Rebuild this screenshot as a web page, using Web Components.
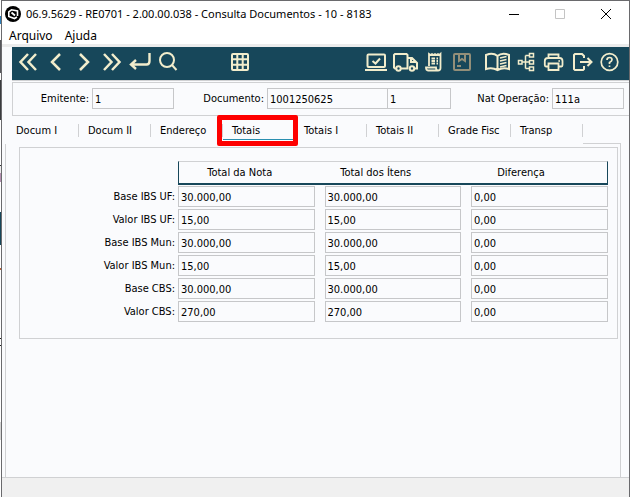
<!DOCTYPE html>
<html lang="pt-BR">
<head>
<meta charset="utf-8">
<meta name="viewport" content="width=device-width, initial-scale=1">
<title>Consulta Documentos</title>
<style>
  body {
    margin: 0;
    color: #000;
    font-family: "DejaVu Sans Condensed", "DejaVu Sans", sans-serif;
    font-size: 11px;
    --ui-font: "Noto Sans", "Open Sans", sans-serif;
    --line: #d0d1d3;
    --field-line: #c6c7c9;
    --face: #fafbfd;
    --bar: #17475a;
    --icon: #f2edcc;
  }
</style>
</head>
<body>
<app-window>
  <title-bar slot="top">06.9.5629 - RE0701 - 2.00.00.038 - Consulta Documentos - 10 - 8183</title-bar>
  <menu-bar slot="top" items="Arquivo,Ajuda"></menu-bar>
  <tool-bar></tool-bar>
  <document-header>
    <text-field label="Emitente:" values="1" widths="82"></text-field>
    <text-field label="Documento:" values="1001250625,1" widths="121,64"></text-field>
    <text-field label="Nat Operação:" values="111a" widths="72"></text-field>
  </document-header>
  <tab-strip items="Docum I,Docum II,Endereço,Totais,Totais I,Totais II,Grade Fisc,Transp" active="3">
    <totals-table></totals-table>
  </tab-strip>
  <status-bar slot="bottom"></status-bar>
</app-window>

<script>
class BaseElement extends HTMLElement {
  connectedCallback() {
    if (!this.shadowRoot) this.attachShadow({ mode: 'open' });
    this.shadowRoot.innerHTML = this.getStyle() + this.getTemplate();
  }

  list(name) {
    return (this.getAttribute(name) || '').split(',');
  }
}

class AppWindow extends BaseElement {
  getTemplate() {
    return `
      <div class="frame">
        <slot name="top"></slot>
        <main><slot></slot></main>
        <slot name="bottom"></slot>
      </div>
    `;
  }

  getStyle() {
    return `
      <style>
        :host {
          display: flex;
          min-height: 100vh;
          box-sizing: border-box;
          padding-left: 1px;
          background: linear-gradient(#fff 0 16px, #2f7fb8 16px 24px, #fff 24px 40px, #55565a 40px 73px,
            #fff 73px 80px, #3a3b3e 80px 120px, #fff 120px 165px, #333 165px 166px, #eee 166px 173px,
            #b48fb0 173px 182px, #fff 182px 212px, #17475a 212px 245px, #fff 245px 268px, #b8623a 268px 270px,
            #fff 270px 338px, #222 338px 339px, #fff 339px 345px, #222 345px 346px, #fff 346px 422px,
            #d5d5d5 422px 440px, #fff 440px);
        }
        .frame {
          flex: 1;
          min-width: 0;
          display: flex;
          flex-direction: column;
          border: solid #6a6a6d;
          border-width: 1px 1px 0;
          background: #fff;
        }
        main {
          flex: 1;
          display: flex;
          flex-direction: column;
          border-top: 3px solid #ececec;
          background: var(--face);
        }
      </style>
    `;
  }
}

class TitleBar extends BaseElement {
  getTemplate() {
    return `
      <svg class="logo" viewBox="0 0 18 18" width="18" height="18" aria-hidden="true">
        <circle cx="9" cy="9" r="8" fill="#000"/>
        <path d="M13.5 11V6L7.5 4.8L4.800 6.800V11.500L10.500 13.500L13 12" fill="none" stroke="#fff" stroke-width="1.600"/>
        <path d="M7.500 7.500L11 10.500" stroke="#fff" stroke-width="1.800"/>
      </svg>
      <h1><slot></slot></h1>
      <button aria-label="Minimizar"><svg viewBox="0 0 10 10"><path d="M0 5.5H10"/></svg></button>
      <button aria-label="Maximizar" disabled><svg viewBox="0 0 10 10"><path d="M.5 .5H9.5V9.5H.5Z"/></svg></button>
      <button aria-label="Fechar"><svg viewBox="0 0 10 10"><path d="M0 0L10 10M10 0L0 10"/></svg></button>
    `;
  }

  getStyle() {
    return `
      <style>
        :host {
          display: flex;
          align-items: center;
          height: 26px;
          padding-left: 2px;
          font-family: var(--ui-font);
        }
        .logo { flex: none; }
        h1 {
          flex: 1;
          margin: 0 0 0 4px;
          font-size: 11px;
          line-height: 16px;
          font-weight: normal;
          white-space: nowrap;
        }
        button {
          width: 46px;
          height: 24px;
          padding: 0;
          border: 0;
          background: none;
          color: #000;
        }
        button:disabled { color: #c4c4c4; }
        button svg {
          display: block;
          width: 10px;
          height: 10px;
          margin: 0 auto;
          fill: none;
          stroke: currentColor;
        }
      </style>
    `;
  }
}

class MenuBar extends BaseElement {
  getTemplate() {
    return this.list('items').map((item) => `<button>${item}</button>`).join('');
  }

  getStyle() {
    return `
      <style>
        :host {
          display: flex;
          gap: 12px;
          height: 17px;
          padding-left: 7px;
        }
        button {
          padding: 0;
          border: 0;
          background: none;
          color: inherit;
          font: 12px/17px var(--ui-font);
        }
      </style>
    `;
  }
}

const ICONS = {
  first: '<path d="M14 4L6.500 12L14 20M22 4L14.500 12L22 20" stroke-width="2.500"/>',
  previous: '<path d="M18 4L10 12L18 20" stroke-width="2.500"/>',
  next: '<path d="M10 4L18 12L10 20" stroke-width="2.500"/>',
  last: '<path d="M6 4L13.500 12L6 20M14 4L21.500 12L14 20" stroke-width="2.500"/>',
  enter: '<path d="M23.500 3V11Q23.500 14.500 20.500 14.500H5M10 10L5 14.500L10 19" stroke-width="2.400"/>',
  search: '<circle cx="13" cy="10" r="7"/><path d="M18 15L22.500 20"/>',
  grid: '<rect x="6" y="4" width="16" height="16" rx="1"/><path d="M11.300 4V20M16.700 4V20M6 9.300H22M6 14.700H22"/>',
  laptop: '<rect x="3.500" y="4.500" width="17.500" height="12.500" rx="1"/><path d="M1 20H23M8.500 11L11.500 13.500L16 8.500"/>',
  truck: '<path d="M4.500 18.500H3L2 17.500V5L3 4H14.500L15.500 5V18.500H9M15.500 8H20L25 13V18.500H22.500M19 8V12H24"/><circle cx="6.500" cy="18.500" r="2.200"/><circle cx="20" cy="18.500" r="2.200"/>',
  receipt: '<path d="M9 16V4L10.500 5L12 4L13.500 5L15 4L16.500 5L18 4L19.500 5L20.500 4V18Q20.500 20.500 18 20.500H8Q6 20.500 6 17.500H16Q16 20.500 18 20.500M11.500 8.500H15M16.500 8.500H18M11.500 11H15M16.500 11H18M11.500 13.500H15M16.500 13.500H18" stroke-width="1.800"/>',
  save: '<rect x="6" y="4" width="16" height="16" rx="1"/><path d="M11 4V11L14 9L17 11V4M9 16H13"/>',
  book: '<path d="M13.500 6Q10 3 5 4L2 5V19Q8 17 13.500 20Q19 17 25 19V5Q18 2 13.500 6V20"/><path d="M16 8L22.500 6.500M16 11L22.500 9.500M16 14L22.500 12.500M16 17L22.500 15.500" stroke-width="1.500"/>',
  tree: '<path d="M10.500 12H17.500M13.500 5.500V18.500M13.500 5.500H17.500M13.500 18.500H17.500M6.500 10.500H10V14H6.500ZM17.500 3.500H21.500V7H17.500ZM17.500 10.500H21.500V14H17.500ZM17.500 17H21.500V20.500H17.500Z" stroke-width="1.500"/>',
  print: '<path d="M8.500 8V4.500H18.500V8M8 16.500H6Q4.800 16.500 4.800 15V11Q4.800 8 8 8H19.500Q22.500 8 22.500 11V15Q22.500 16.500 21.500 16.500H19M8.500 13.500H18.500V20H8.500ZM18.500 11H19.800" stroke-width="1.800"/>',
  exit: '<path d="M16 8V6L14 4H7L6 5V19L7 20H15L16 19V16M12 12H23M19.500 8L23.500 12L19.500 16"/>',
  help: '<circle cx="13.500" cy="12" r="8.300" stroke-width="1.700"/><path d="M11 10Q11 7.500 13.500 7.500Q16 7.500 16 9.700Q16 11 13.500 12.500V14M13.500 15.500V17" stroke-width="1.700"/>',
};

class ToolBar extends BaseElement {
  group(name, buttons) {
    return `<div class="${name}">${buttons.map(([icon, label]) => `
      <button aria-label="${label}" ${icon === 'save' ? 'disabled' : ''}>
        <svg viewBox="0 0 28 24">${ICONS[icon]}</svg>
      </button>`).join('')}</div>`;
  }

  getTemplate() {
    return this.group('move', [['first', 'Primeiro'], ['previous', 'Anterior'], ['next', 'Próximo'],
      ['last', 'Último'], ['enter', 'Vá para'], ['search', 'Pesquisa']])
      + this.group('grid', [['grid', 'Zoom']])
      + this.group('extra', [['laptop', 'Conferência'], ['truck', 'Transporte'], ['receipt', 'Nota'], ['save', 'Salvar']])
      + this.group('system', [['book', 'Consultas'], ['tree', 'Relacionamentos'], ['print', 'Imprimir'],
        ['exit', 'Sair'], ['help', 'Auxílio']]);
  }

  getStyle() {
    return `
      <style>
        :host {
          display: flex;
          margin-left: 10px;
          padding: 3px 5px 0 2px;
          height: 30px;
          background: var(--bar);
          border-bottom: 1px solid var(--line);
        }
        div { display: flex; }
        .grid { margin-left: 44px; }
        .extra { margin-left: auto; }
        .system { margin-left: 8px; }
        button {
          padding: 0;
          width: 28px;
          height: 24px;
          border: 0;
          background: none;
          color: var(--icon);
        }
        button:disabled { color: #938f79; }
        svg {
          display: block;
          width: 28px;
          height: 24px;
          fill: none;
          stroke: currentColor;
          stroke-width: 2;
        }
      </style>
    `;
  }
}

class DocumentHeader extends BaseElement {
  getTemplate() {
    return '<slot></slot>';
  }

  getStyle() {
    return `
      <style>
        :host {
          display: flex;
          margin: 1px 0 0 10px;
          padding: 5px 5px 6px 0;
          border: solid var(--line);
          border-width: 1px 0 1px 1px;
        }
        ::slotted(:nth-child(1)) { flex: 161; }
        ::slotted(:nth-child(2)) { flex: 277; }
        ::slotted(:nth-child(3)) { flex: 173; }
      </style>
    `;
  }
}

class TextField extends BaseElement {
  getTemplate() {
    const widths = this.list('widths');
    const inputs = this.list('values').map((value, i) => `
      <input id="f${i}" value="${value}" style="width: ${widths[i]}px" ${i ? 'aria-label="Série"' : ''} readonly>`);
    return `<label for="f0">${this.getAttribute('label')}</label>${inputs.join('')}`;
  }

  getStyle() {
    return `
      <style>
        :host {
          display: flex;
          justify-content: flex-end;
          align-items: center;
          min-width: 0;
        }
        label {
          padding-right: 3px;
          white-space: nowrap;
        }
        input {
          box-sizing: border-box;
          height: 21px;
          padding: 1px 2px 0;
          border: 1px solid var(--field-line);
          border-radius: 0;
          background: var(--face);
          font: inherit;
        }
        input + input { margin-left: -1px; }
      </style>
    `;
  }
}

class TabStrip extends BaseElement {
  getTemplate() {
    const active = Number(this.getAttribute('active'));
    const tabs = this.list('items').map((item, i) => `
      <button role="tab" aria-selected="${i === active}">${item}</button>`).join('');
    return `
      <div class="tabs" role="tablist">${tabs}<span class="rest"></span></div>
      <section><slot></slot></section>
    `;
  }

  getStyle() {
    return `
      <style>
        :host {
          flex: 1;
          display: flex;
          flex-direction: column;
          padding: 0 8px 0 3px;
        }
        .tabs {
          display: flex;
          height: 28px;
          padding-left: 2px;
        }
        button {
          position: relative;
          width: 72px;
          padding: 0 0 0 9px;
          border: 0;
          background: linear-gradient(var(--line), var(--line)) 71px 8px / 1px 13px no-repeat;
          color: inherit;
          font: inherit;
          text-align: left;
          white-space: nowrap;
        }
        button[aria-selected="true"]::before {
          content: "";
          position: absolute;
          inset: auto 2px 4px 0;
          height: 1px;
          background: #2a8fb0;
        }
        button[aria-selected="true"]::after {
          content: "";
          position: absolute;
          inset: -1px -3px -2px -6px;
          border: 5px solid #fe0000;
          border-radius: 2px;
        }
        .rest {
          flex: 1;
          border-bottom: 1px solid var(--line);
        }
        section {
          flex: 1;
          padding: 3px 2px 0 13px;
          border: solid var(--line);
          border-width: 0 1px;
        }
      </style>
    `;
  }
}

class TotalsTable extends BaseElement {
  getTemplate() {
    const heads = ['Total da Nota', 'Total dos Ítens', 'Diferença'];
    const rows = [
      ['Base IBS UF:', '30.000,00'],
      ['Valor IBS UF:', '15,00'],
      ['Base IBS Mun:', '30.000,00'],
      ['Valor IBS Mun:', '15,00'],
      ['Base CBS:', '30.000,00'],
      ['Valor CBS:', '270,00'],
    ];
    return `
      <table>
        <colgroup><col class="label"><col><col><col class="last"></colgroup>
        <thead><tr><td></td>${heads.map((head) => `<th scope="col">${head}</th>`).join('')}</tr></thead>
        <tbody>${rows.map(([label, total], i) => `
          <tr>
            <th scope="row"><label for="r${i}c0">${label}</label></th>
            ${[total, total, '0,00'].map((value, j) => `
              <td><input id="r${i}c${j}" value="${value}" ${j ? `aria-label="${label} ${heads[j]}"` : ''} readonly></td>`).join('')}
          </tr>`).join('')}
        </tbody>
      </table>
    `;
  }

  getStyle() {
    return `
      <style>
        :host {
          display: block;
          padding: 13px 9px 15px 0;
          border: 1px solid var(--line);
        }
        table {
          width: 100%;
          table-layout: fixed;
          border-spacing: 0;
        }
        .label { width: 158px; }
        .last { width: 23.3%; }
        th, td {
          padding: 0;
          font-weight: normal;
        }
        thead th {
          height: 21px;
          border-top: 1px solid var(--line);
          border-bottom: 2px solid var(--bar);
        }
        thead th:nth-child(2) {
          padding-right: 24px;
          border-left: 1px solid var(--bar);
        }
        thead th:nth-child(3) { padding-right: 44px; }
        thead th:nth-child(4) {
          padding-right: 36px;
          border-right: 1px solid var(--bar);
        }
        tbody th {
          padding-right: 3px;
          text-align: right;
        }
        tbody td {
          height: 23px;
          padding-right: 10px;
        }
        tbody td:last-child { padding-right: 0; }
        input {
          display: block;
          box-sizing: border-box;
          width: 100%;
          height: 21px;
          padding: 1px 2px 0;
          border: 1px solid var(--field-line);
          border-radius: 0;
          background: var(--face);
          font: inherit;
        }
      </style>
    `;
  }
}

class StatusBar extends BaseElement {
  getTemplate() {
    return '';
  }

  getStyle() {
    return `
      <style>
        :host {
          display: block;
          height: 19px;
          border-top: 1px solid var(--line);
          background: #f0f0f0;
        }
      </style>
    `;
  }
}

customElements.define('app-window', AppWindow);
customElements.define('title-bar', TitleBar);
customElements.define('menu-bar', MenuBar);
customElements.define('tool-bar', ToolBar);
customElements.define('document-header', DocumentHeader);
customElements.define('text-field', TextField);
customElements.define('tab-strip', TabStrip);
customElements.define('totals-table', TotalsTable);
customElements.define('status-bar', StatusBar);
</script>
</body>
</html>
